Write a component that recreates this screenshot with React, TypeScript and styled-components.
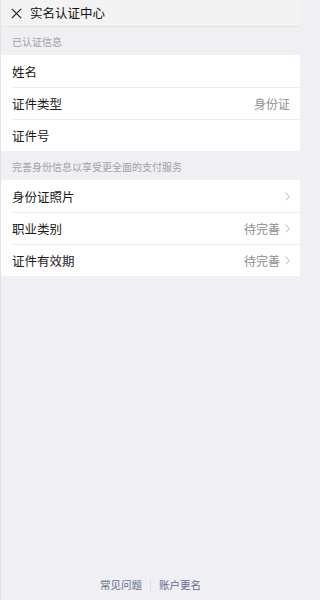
import React from "react";
import styled, { createGlobalStyle } from "styled-components";

const GlobalStyle = createGlobalStyle`
  html, body { margin: 0; padding: 0; background: #efeff4; }
  body { font-family: "Noto Sans CJK SC", "Noto Sans", sans-serif; }
  * { box-sizing: border-box; }
`;

const Page = styled.div`
  width: 300px;
  min-height: 600px;
  display: flex;
  flex-direction: column;
  background: #efeff4;
  border-left: 1px solid #e4e4e8;
`;

const Header = styled.div`
  height: 27px;
  background: #f3f3f3;
  border-bottom: 1px solid #e3e3e3;
  display: flex;
  align-items: center;
  padding-left: 10px;
  gap: 8px;
`;

const Title = styled.span`
  font-size: 12.5px;
  color: #111;
  font-weight: 400;
  line-height: 1;
`;

const SectionLabel = styled.div<{ $h: number }>`
  height: ${(p) => p.$h}px;
  display: flex;
  align-items: center;
  padding: 1px 0 0 11px;
  font-size: 10px;
  color: #a0a0a5;
`;

const Group = styled.div`
  background: #fff;
`;

const Row = styled.div<{ $first?: boolean }>`
  position: relative;
  height: 32px;
  display: flex;
  align-items: center;
  justify-content: space-between;
  padding: 0 10px 0 11px;
  &::before {
    content: "";
    display: ${(p) => (p.$first ? "none" : "block")};
    position: absolute;
    top: 0;
    left: 11px;
    right: 0;
    height: 1px;
    background: #ececec;
  }
`;

const Label = styled.span`
  font-size: 12.5px;
  color: #1a1a1a;
`;

const Value = styled.span`
  display: flex;
  align-items: center;
  gap: 5px;
  font-size: 12px;
  color: #8c8c8c;
`;

const Footer = styled.div`
  margin-top: auto;
  height: 30px;
  display: flex;
  justify-content: center;
  align-items: center;
  gap: 8px;
  padding-bottom: 1px;
`;

const FooterLink = styled.span`
  font-size: 10.5px;
  color: #5f6d8c;
`;

const Sep = styled.span`
  width: 1px;
  height: 12px;
  background: #dcdce0;
`;

const Chevron = () => (
  <svg width="5" height="9" viewBox="0 0 5 9" fill="none">
    <path d="M0.6 0.6 L4.3 4.5 L0.6 8.4" stroke="#b5b5b5" strokeWidth="1" />
  </svg>
);

const CloseIcon = () => (
  <svg width="11" height="11" viewBox="0 0 11 11" fill="none">
    <path d="M0.8 0.8 L10.2 10.2 M10.2 0.8 L0.8 10.2" stroke="#222" strokeWidth="1.2" />
  </svg>
);

type Item = { label: string; value?: string; arrow?: boolean };

const verified: Item[] = [
  { label: "姓名" },
  { label: "证件类型", value: "身份证" },
  { label: "证件号" },
];

const more: Item[] = [
  { label: "身份证照片", arrow: true },
  { label: "职业类别", value: "待完善", arrow: true },
  { label: "证件有效期", value: "待完善", arrow: true },
];

const List = ({ items }: { items: Item[] }) => (
  <Group>
    {items.map((it, i) => (
      <Row key={it.label} $first={i === 0}>
        <Label>{it.label}</Label>
        <Value>
          {it.value && <span>{it.value}</span>}
          {it.arrow && <Chevron />}
        </Value>
      </Row>
    ))}
  </Group>
);

export default function App() {
  return (
    <>
      <GlobalStyle />
      <Page>
        <Header>
          <CloseIcon />
          <Title>实名认证中心</Title>
        </Header>
        <SectionLabel $h={28}>已认证信息</SectionLabel>
        <List items={verified} />
        <SectionLabel $h={29}>完善身份信息以享受更全面的支付服务</SectionLabel>
        <List items={more} />
        <Footer>
          <FooterLink>常见问题</FooterLink>
          <Sep />
          <FooterLink>账户更名</FooterLink>
        </Footer>
      </Page>
    </>
  );
}
